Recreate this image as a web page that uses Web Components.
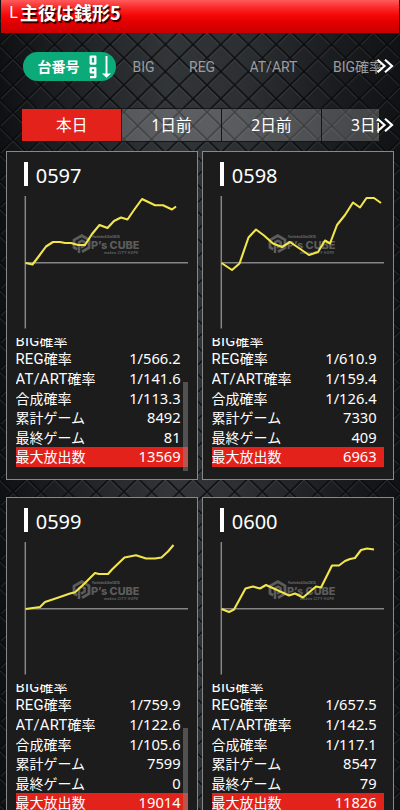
<!DOCTYPE html>
<html lang="ja"><head><meta charset="utf-8"><title>データ</title>
<style>html,body{margin:0;background:#111315;height:810px;overflow:hidden}body{font-family:"Noto Sans","Noto Sans CJK JP",sans-serif;color:#fff}</style></head>
<body><data-app></data-app>
<script>
const define=(name,html,setup)=>customElements.define(name,class extends HTMLElement{
  connectedCallback(){ if(this.shadowRoot)return; const t=document.createElement('template'); t.innerHTML=typeof html==='function'?html(this):html;
    this.attachShadow({mode:'open'}).append(t.content.cloneNode(true)); if(setup)setup(this);}
});

define('diamond-plate',`<style>:host{display:block;position:absolute;inset:0;z-index:0}svg{display:block}</style>
<svg width="400" height="810"><defs>
<linearGradient id="g"><stop offset="0" stop-color="#0e1012"/><stop offset=".12" stop-color="#1a1c1f"/><stop offset=".42" stop-color="#323538"/><stop offset=".6" stop-color="#2d3033"/><stop offset=".85" stop-color="#191b1e"/><stop offset="1" stop-color="#101214"/></linearGradient>
<pattern id="p" width="27.7" height="27.1" patternUnits="userSpaceOnUse" patternTransform="translate(26.9 17.5)" fill="none">
<g stroke="#63676b" stroke-opacity=".42" stroke-width="1"><path d="M-2-.4 29.7 30.6M-2 30.6 29.7-.4"/></g>
<g stroke="#07080a" stroke-opacity=".85" stroke-width="1.7"><path d="M-2-1.96 29.7 29.06M-2 29.06 29.7-1.96"/></g></pattern></defs>
<rect width="400" height="810" fill="url(#g)"/><rect width="400" height="810" fill="url(#p)"/></svg>`);

define('title-bar',`<style>:host{display:flex;height:33px;margin:0 1.5px 0 1px;box-sizing:border-box;padding-left:8px;background:linear-gradient(#ff5b5b 0,#fa3030 20%,#f60909 45%,#e50000 65%,#c90000 100%);font-size:18px;line-height:24px;white-space:pre;text-shadow:1.5px 1.5px 1px #200}
:host{font-weight:700;font-family:"Noto Sans CJK JP",sans-serif}.l{font-weight:400;font-size:17px;font-family:"Noto Sans","Noto Sans CJK JP",sans-serif;width:11px;text-shadow:none}</style><span class="l">L</span><slot></slot>`);

define('more-icon',`<style>:host{display:block;width:18px;height:14px}svg{display:block}</style><svg width="18" height="14" fill="none" stroke="#fff" stroke-width="2.2"><path d="M1.5 .8 8.5 7 1.5 13.2M9 .8 16 7 9 13.2"/></svg>`);

define('sort-bar',`<style>:host{display:grid;grid-template-columns:110px 56.5px 60.5px 83.5px 60px;height:29px;margin:19px 0 0 22.5px;align-items:center;position:relative;color:#9b9d9f;font:14px/28px Roboto,"Noto Sans CJK JP",sans-serif;white-space:nowrap}
.pill{box-sizing:border-box;width:93px;height:29px;border-radius:15px;background:#0caa78;color:#fff;padding-left:15px;display:flex;align-items:center;font:700 14px/26px "Noto Sans CJK JP",sans-serif}
.pill span{width:42px;margin-top:-2px}.pill svg{margin-left:8px}more-icon{position:absolute;right:6px;top:7px}
.last{display:block;width:48px;overflow:hidden}</style>
<div class="pill"><span>台番号</span><svg width="24" height="25" fill="none" stroke="#fff" stroke-width="2.3"><path d="M2.7 2.7h4.6v6.9H2.7zM7.3 18.3H2.7v-4.1h4.6v8.9H2" stroke-linejoin="round"/><path d="M18.5 2v18" stroke-width="1.9"/><path d="M14 19.5h9l-4.5 4.3z" fill="#fff" stroke="none"/></svg></div>
<span>BIG</span><span>REG</span><span>AT/ART</span><span class="last">BIG確率</span><more-icon></more-icon>`);

define('day-tabs',`<style>:host{display:flex;position:relative;height:34px;margin:27px 0 0 22px;font:15.7px/33px "Noto Sans","Noto Sans CJK JP",sans-serif;white-space:nowrap}
div{box-sizing:border-box;width:100px;text-align:center;padding-left:1px;background:rgba(255,255,255,.21);border:solid #141517;border-width:1px 1px 1px 0}
.on{background:#e3231b;width:99.5px}.cut{width:57.5px;overflow:hidden;text-align:left;padding-left:29.5px;border-right:0}
more-icon{position:absolute;right:6px;top:10px}</style>
<div class="on">本日</div><div>1日前</div><div>2日前</div><div class="cut">3日前</div><more-icon></more-icon>`);

define('p-mark',`<style>:host{display:block;color:#5c5c5c}svg{display:block}text{font-family:Inter,sans-serif;font-weight:800;fill:currentColor}</style>
<svg width="70" height="22" fill="none" stroke="currentColor"><path d="M5.2 15.3 2 13.4V6l7.8-4.3L17 5.8v8l-7 4" stroke-width="2.8"/><path d="M7 19V8.3l3-1.7 2.7 1.7v3.3L9 13.8" stroke-width="2.5"/>
<g stroke="none"><text x="19" y="14.5" font-size="10.5" textLength="48.5" lengthAdjust="spacingAndGlyphs">P’s CUBE</text><text x="20" y="4" font-size="3.3" textLength="28">Pachinko &amp; Slot DATA</text><text x="32" y="19.7" font-size="3.3" textLength="34" style="font-style:italic">makes CITY HOPE</text></g></svg>`);

define('slump-graph',h=>`<style>:host{display:block;position:relative;width:164px;height:134px}svg{display:block;position:relative}p-mark{position:absolute;left:48px;top:38px}</style><p-mark></p-mark>
<svg width="164" height="134" fill="none"><path d="M1.3 0V132.5M1.3 66.8H164" stroke="#858587" stroke-width="1.5"/><polyline points="${h.getAttribute('points')}" stroke="#f3e64c" stroke-width="2.1" stroke-linejoin="round"/></svg>`);

define('stat-row',`<style>:host{display:flex;justify-content:space-between;box-sizing:border-box;height:19.6px;width:172px;padding-right:7.6px;line-height:19.6px;font-size:14.7px;white-space:nowrap}:host([hot]){background:#e3231b}.k{font:14px/20.4px Roboto,"Noto Sans CJK JP",sans-serif;margin-left:-.7px}</style><span class="k"><slot name="k"></slot></span><slot></slot>`);

define('machine-card',h=>{
 const v=h.getAttribute('values').split(','), k=['BIG確率','REG確率','AT/ART確率','合成確率','累計ゲーム','最終ゲーム','最大放出数'];
 return `<style>:host{display:block;box-sizing:border-box;width:191.4px;height:329px;background:#1c1c1c;border:1px solid #87888a;overflow:hidden;position:relative}
 h2{margin:10px 0 0 16.5px;height:24px;border-left:4px solid #fff;padding-left:8px;font:400 20px/27px "Noto Sans",sans-serif}
 slump-graph{margin:10px 0 0 16.5px}.list{margin:7.5px 0 0 9px;height:129.5px;overflow:hidden;display:flex;flex-direction:column;justify-content:flex-end}
 .latin{font-size:14.8px;letter-spacing:.22px}stat-row{flex:none}stat-row:first-child{margin-bottom:-1px}.thumb{position:absolute;right:8.8px;top:230px;width:4.3px;height:89px;background:rgba(140,140,140,.48)}</style>
 <h2>${h.getAttribute('number')}</h2><slump-graph points="${h.getAttribute('points')}"></slump-graph>
 <div class="list">${k.map((n,i)=>`<stat-row ${i==6?'hot':''}><span slot="k">${n.replace(/^[A-Z/]+/,'<span class="latin">$&</span>')}</span>${v[i]}</stat-row>`).join('')}</div>${h.hasAttribute('scroll')?'<div class="thumb"></div>':''}`});

define('data-app',`<style>:host{display:block;width:400px;height:810px;position:relative;overflow:hidden;background:#000}main{position:relative;z-index:1}
.cards{display:grid;grid-template-columns:191.4px 191.4px;gap:17px 4.7px;margin:9px 0 0 6.2px}</style>
<diamond-plate></diamond-plate><main><title-bar>主役は銭形5</title-bar><sort-bar></sort-bar><day-tabs></day-tabs>
<div class="cards">
<machine-card scroll number="0597" values=",1/566.2,1/141.6,1/113.3,8492,81,13569" points="1.5,67 8.5,68.5 15,60 22,50.5 29,46 36,46 41,47 47,47 54,49 61,49 68,38 75.5,29 83.5,32 90,25 97,21.5 103.5,23.5 110,14 118,3 131,9.3 139,9.3 148,13.5 152,10.5"></machine-card>
<machine-card number="0598" values=",1/610.9,1/159.4,1/126.4,7330,409,6963" points="1.5,67 12,74 19.5,67.5 28.5,41.5 36,33.5 44,39.5 53,47.5 62,51 70,46 89,59 98,56 105,44.5 110,47.5 117,29 125,19 133,6.5 140,11.5 146.5,2 154,2 161,7"></machine-card>
<machine-card scroll number="0599" values=",1/759.9,1/122.6,1/105.6,7599,0,19014" points="1.5,67 16,65 21,60 33,56 46,51.5 51,50.3 60,42 71,31 75,32 84,32 88,27.5 100.5,15.5 112,13.3 122,16.5 131,16.5 137.5,15.5 144,9.5 149.5,3"></machine-card>
<machine-card number="0600" values=",1/657.5,1/142.5,1/117.1,8547,79,11826" points="1.5,67 9,70 14,67.5 25.5,46.5 33,44.5 40,46.5 46,43 69,53.5 75,51.5 83,55.5 96,44.5 101,45.5 112,23.5 119,23.5 125,19 130,17 135,16 141,8 147,6.5 154,7.5"></machine-card>
</div></main>`);
</script></body></html>
